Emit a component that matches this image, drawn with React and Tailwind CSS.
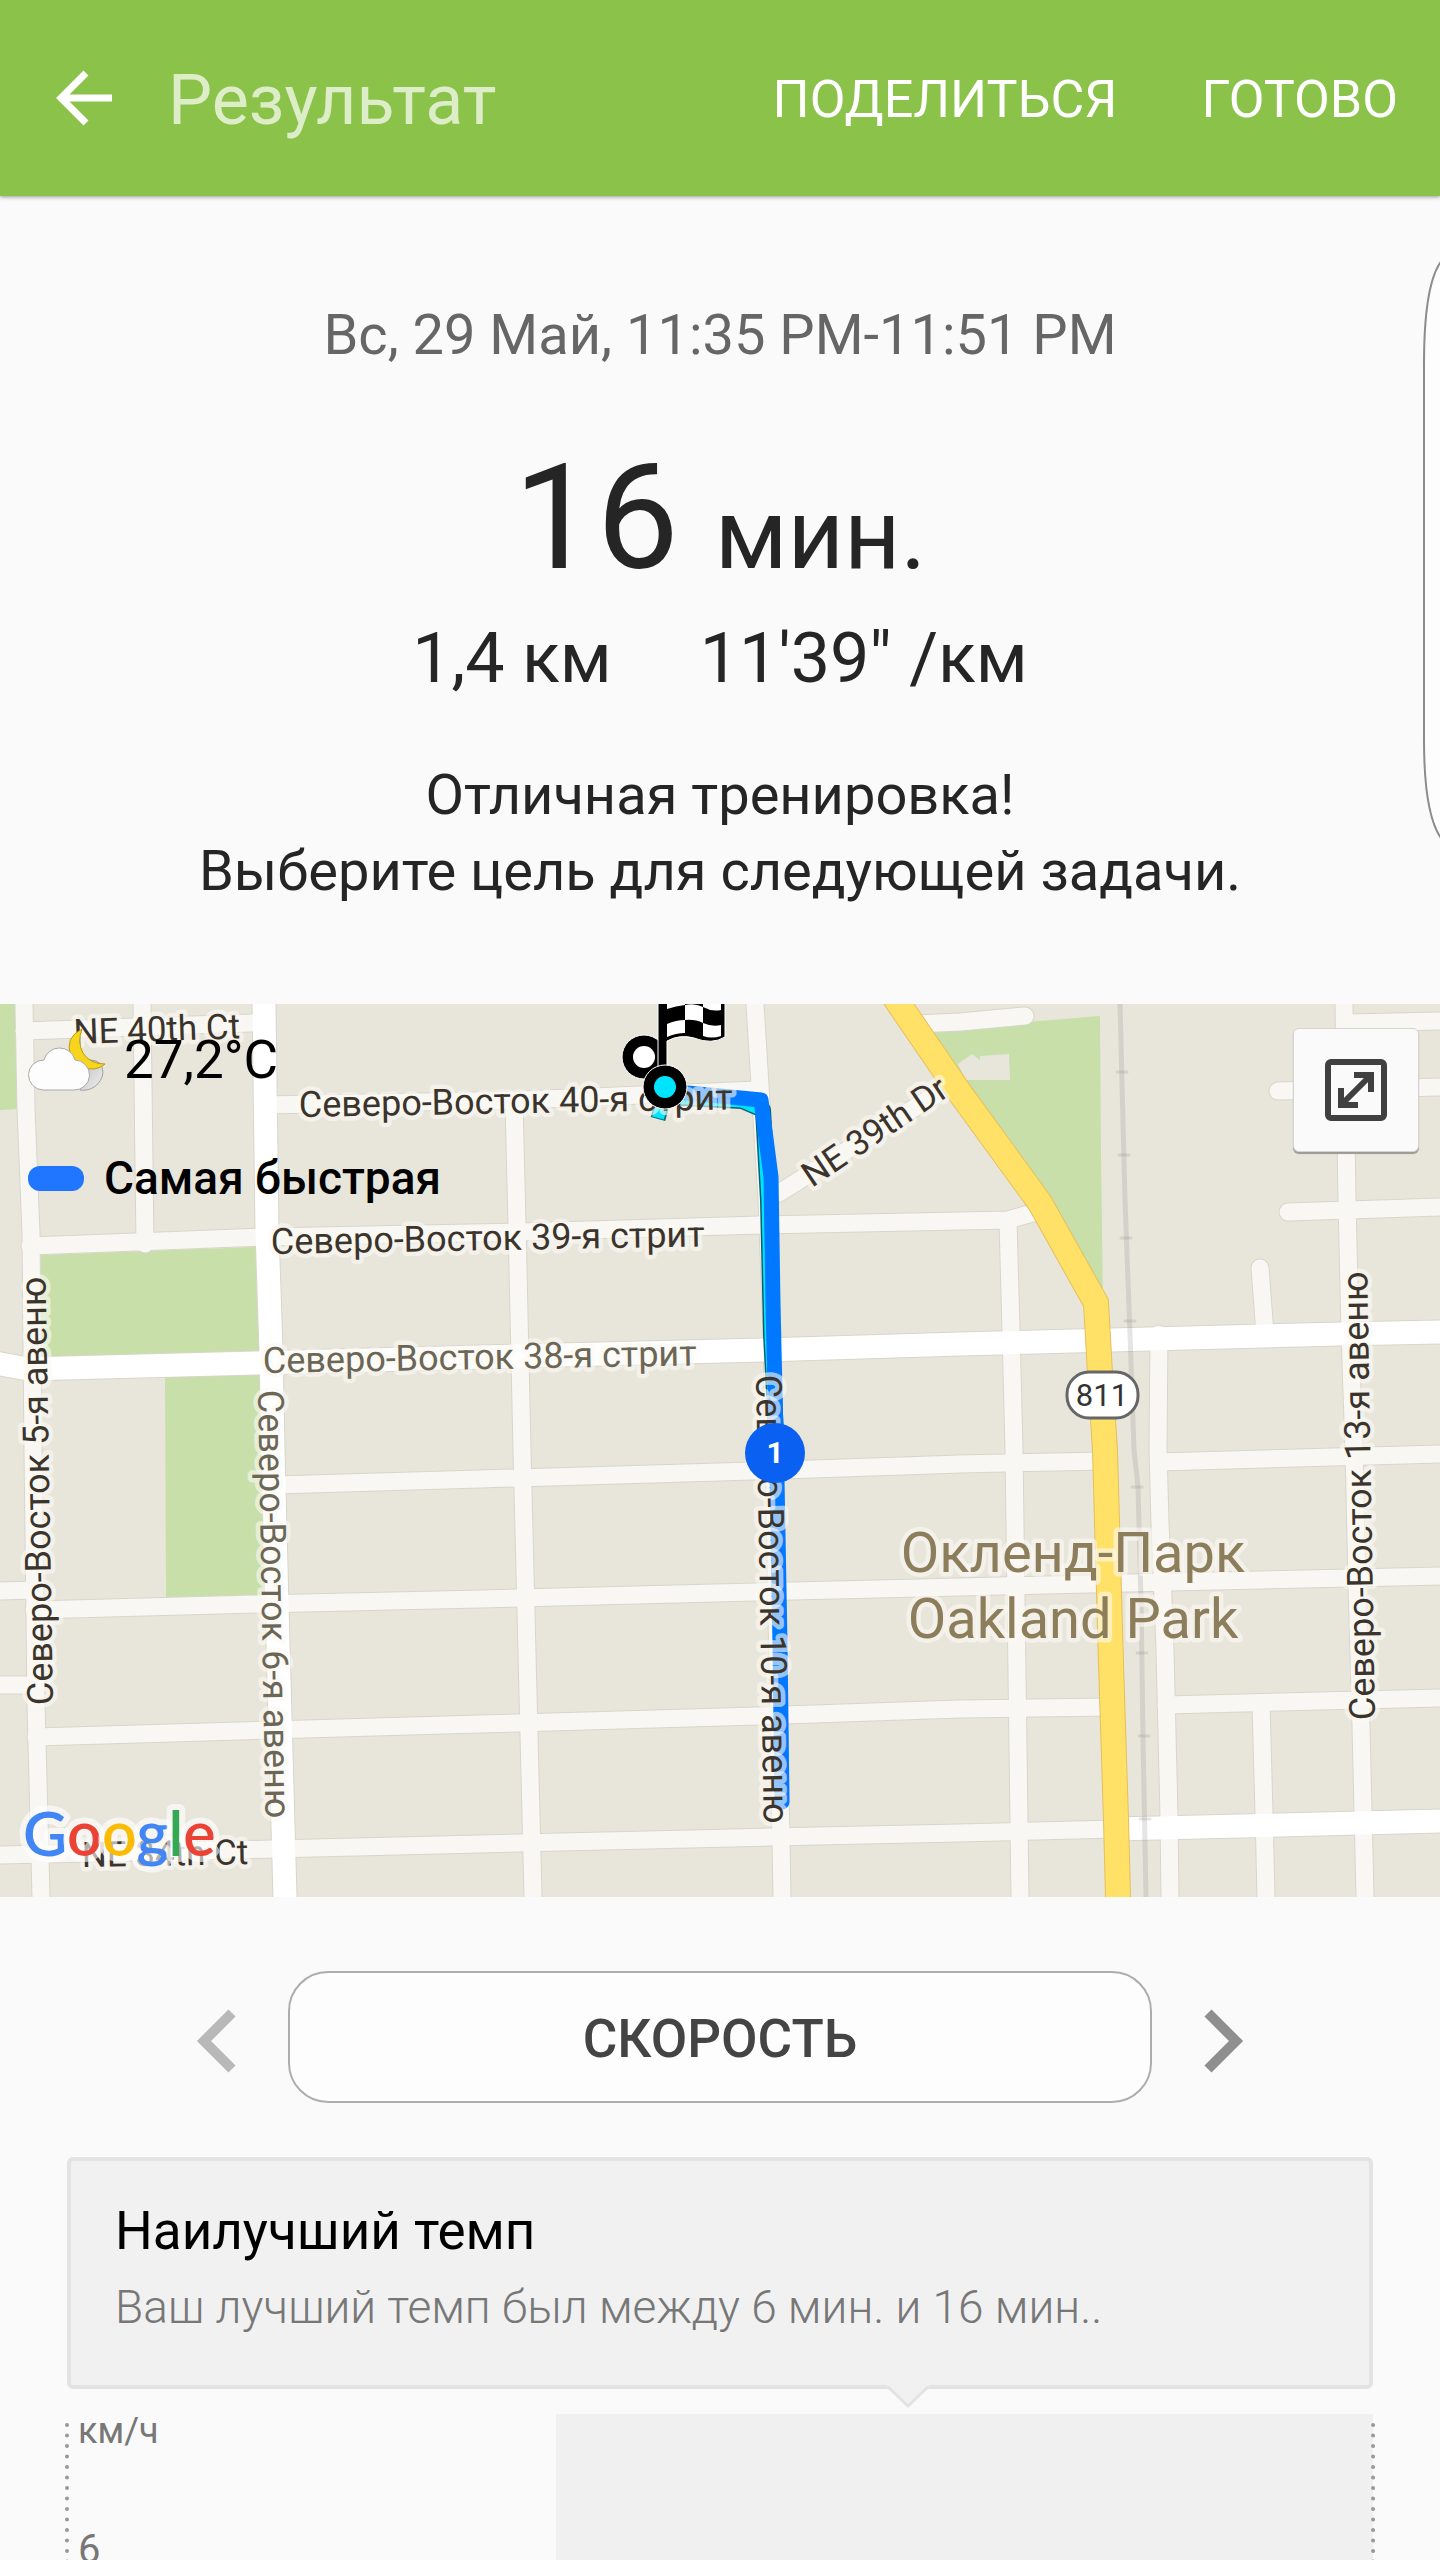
import { useState } from 'react'

const METRICS = ['СКОРОСТЬ', 'ВЫСОТА']

// Street geometry, in the map's own coordinates
const STREETS = [
  'M24 0 L26 105 L31 229 L33 446 L36 700 L41 893',
  'M142 0 L145 240',
  'M514 98 L517 220 L522 446 L533 893',
  'M755 0 L767 196 L772 330 L782 893',
  'M1008 217 L1011 326 L1014 446 L1020 893',
  'M1159 330 L1158 446 L1160 519 L1165 646 L1169 812 L1170 893',
  'M1261 700 L1264 809 L1266 893',
  'M1344 0 L1347 196 L1350 330 L1354 446 L1357 580 L1361 722 L1365 893',
  'M24 27 L250 19 L264 18',
  'M264 101 L523 96 L757 86',
  'M30 242 L136 238 L264 233 L520 228 L760 221 L960 217 L1008 216 L1036 208',
  'M276 481 L480 475 L753 467 L960 460 L1104 457',
  'M1159 458 L1440 450',
  'M0 587 L34 586',
  'M34 606 L260 600 L480 595 L755 588 L960 583 L1170 578 L1440 572',
  'M0 681 L36 681',
  'M36 733 L270 726 L480 720 L757 712 L960 705 L1108 703',
  'M1166 701 L1440 694',
  'M0 851 L273 845 L480 840 L770 833 L960 829 L1115 825',
  'M1350 19 L1440 17',
  'M779 189 L943 86',
  'M915 20 L960 18 L1025 12',
  'M1278 87 L1440 83',
  'M1288 208 L1440 203',
  'M1260 264 L1265 330',
]

const AVENUES = [
  'M264 0 L267 226 L271 346 L273 446 L278 640 L285 893',
  'M-10 358 L28 365 L257 359 L520 352 L763 346 L960 340 L1340 330 L1440 328',
  'M1116 825 L1440 817',
]

const HIGHWAY = 'M890 -14 L899 0 L960 89 L1040 199 L1096 299 L1100 369 L1105 446 L1111 660 L1116 816 L1118 893'
const RAILWAY = 'M1120 0 L1122 79 L1125 196 L1130 330 L1134 446 L1138 483 L1141 596 L1143 733 L1146 893'

const RAIL_TICKS = [
  [1122, 68],
  [1124, 151],
  [1126, 234],
  [1130, 317],
  [1137, 483],
  [1142, 649],
  [1144, 732],
  [1145, 815],
]

const LABELS = [
  { text: 'NE 40th Ct', x: 74, y: 40, angle: -2, size: 35, color: '#3b342c' },
  { text: 'Северо-Восток 40-я стрит', x: 299, y: 113, angle: -1, size: 36, color: '#3b342c' },
  { text: 'Северо-Восток 39-я стрит', x: 271, y: 250, angle: -1, size: 36, color: '#3b342c' },
  { text: 'Северо-Восток 38-я стрит', x: 263, y: 369, angle: -1, size: 36, color: '#6b6655' },
  { text: 'NE 39th Dr', x: 812, y: 184, angle: -34, size: 35, color: '#3b342c' },
  { text: 'NE 34th Ct', x: 82, y: 863, angle: -1, size: 35, color: '#3b342c' },
  { text: 'Северо-Восток 5-я авеню', x: 53, y: 701, angle: -91, size: 36, color: '#3b342c' },
  { text: 'Северо-Восток 6-я авеню', x: 258, y: 386, angle: 89, size: 36, color: '#6b6655' },
  { text: 'Северо-Восток 10-я авеню', x: 756, y: 371, angle: 89, size: 36, color: '#3b342c' },
  { text: 'Северо-Восток 13-я авеню', x: 1375, y: 716, angle: -91, size: 36, color: '#3b342c' },
]

function Roads() {
  return (
    <g fill="none" strokeLinecap="round">
      <g stroke="#d8d6cb" strokeWidth="19">
        {STREETS.map((d) => (
          <path key={d} d={d} />
        ))}
      </g>
      <g stroke="#d8d6cb" strokeWidth="25">
        {AVENUES.map((d) => (
          <path key={d} d={d} />
        ))}
      </g>
      <g stroke="#f9f7f3" strokeWidth="17">
        {STREETS.map((d) => (
          <path key={d} d={d} />
        ))}
      </g>
      <g stroke="#ffffff" strokeWidth="23">
        {AVENUES.map((d) => (
          <path key={d} d={d} />
        ))}
      </g>
      <g stroke="#8a8a8a" strokeOpacity="0.22">
        <path d={RAILWAY} strokeWidth="5" />
        {RAIL_TICKS.map(([x, y]) => (
          <path key={y} d={`M${x - 5} ${y} h10`} strokeWidth="3" />
        ))}
      </g>
      <path d={HIGHWAY} stroke="#e6bf5c" strokeWidth="26" />
      <path d={HIGHWAY} stroke="#ffe168" strokeWidth="24" />
    </g>
  )
}

function Route() {
  return (
    <g fill="none" strokeLinejoin="round">
      <path d="M663 96 L658 115" stroke="#0b6a78" strokeWidth="15" />
      <path d="M663 96 L658 114" stroke="#00e5ff" strokeWidth="12" />
      <path d="M665 93 L742 97 L763 106 L768 196 L771 330 L776 430" stroke="#0b5f6e" strokeWidth="16" />
      <path d="M665 93 L742 97 L763 106 L768 196 L771 330 L776 430" stroke="#00e5ff" strokeWidth="13" />
      <path d="M665 87 L720 92 L761 96 L771 173 L773 300 L777 476 L780 640 L782 798" stroke="#0078ff" strokeWidth="15" strokeLinecap="round" />
    </g>
  )
}

function Labels() {
  return (
    <g paintOrder="stroke" stroke="#fbf9f3" strokeOpacity="0.6" strokeWidth="9" strokeLinejoin="round">
      {LABELS.map(({ text, x, y, angle, size, color }) => (
        <text key={text} transform={`translate(${x} ${y}) rotate(${angle})`} fontSize={size} fill={color}>
          {text}
        </text>
      ))}
      <g fontSize="56" fill="#8c7d5b" textAnchor="middle">
        <text x="1073" y="568">Окленд-Парк</text>
        <text x="1073" y="634">Oakland Park</text>
      </g>
    </g>
  )
}

function Markers() {
  return (
    <g>
      <rect x="1067" y="368" width="71" height="46" rx="22" fill="#fff" stroke="#666" strokeWidth="3" />
      <text x="1102" y="402" fontSize="31" textAnchor="middle" fill="#333">811</text>

      <circle cx="775" cy="449" r="30" fill="#0a60f0" />
      <text x="775" y="459" fontSize="30" fontWeight="700" textAnchor="middle" fill="#fff">1</text>

      {/* start */}
      <circle cx="644" cy="53" r="22" fill="#000" stroke="#fff" strokeWidth="1" />
      <circle cx="644" cy="53" r="11" fill="#fff" />

      {/* finish flag */}
      <path d="M658 -4 H725 V33 Q712 41 694 34 Q680 30 667 37 V70 H658 Z" fill="#000" stroke="#fff" strokeWidth="1" />
      <path d="M667 -4 H685 V1 Q676 2 667 5 Z" fill="#fff" />
      <path d="M703 -4 H721 V6 Q712 8 703 3 Z" fill="#fff" />
      <path d="M685 1 Q695 -1 703 3 V19 Q695 15 685 16 Z" fill="#fff" />
      <path d="M667 20 Q676 16 685 16 V29 Q676 29 667 33 Z" fill="#fff" />
      <path d="M703 19 Q712 23 721 21 V32 Q712 35 703 32 Z" fill="#fff" />
      <circle cx="665" cy="83" r="22" fill="#000" stroke="#fff" strokeWidth="1" />
      <circle cx="665" cy="83" r="11" fill="#00e5ff" />
    </g>
  )
}

function GoogleLogo() {
  return (
    <text
      x="23"
      y="852"
      fontSize="61"
      fontWeight="600"
      className="font-[Lato,sans-serif]"
      paintOrder="stroke"
      stroke="#ffffff"
      strokeOpacity="0.6"
      strokeWidth="12"
      strokeLinejoin="round"
    >
      <tspan fill="#4285f4">G</tspan>
      <tspan fill="#ea4335">o</tspan>
      <tspan fill="#fbbc05">o</tspan>
      <tspan fill="#4285f4">g</tspan>
      <tspan fill="#34a853">l</tspan>
      <tspan fill="#ea4335">e</tspan>
    </text>
  )
}

function WeatherIcon() {
  return (
    <svg viewBox="0 0 78 64" className="h-16 w-[78px]" aria-hidden="true">
      <defs>
        <linearGradient id="cloud-back" x1="0" y1="0" x2="1" y2="1">
          <stop offset="0" stopColor="#bdbdbd" />
          <stop offset="1" stopColor="#f0f0f0" />
        </linearGradient>
      </defs>
      <path d="M52 62 A20 20 0 0 0 75 45 Q75 32 62 32 Z" fill="url(#cloud-back)" stroke="#a0a0a0" strokeWidth="1" />
      <path d="M54 1 Q36 10 43 28 Q52 42 66 41 Q73 40 77 36 Q62 36 55 25 Q49 14 54 1 Z" fill="#f7d51d" stroke="#b99b1d" strokeWidth="1" />
      <path
        d="M15 62 A15 15 0 0 1 16 32 A16 16 0 0 1 47 32 A15 15 0 0 1 46 62 Z"
        fill="#fdfdfd"
        stroke="#a8a8a8"
        strokeWidth="1"
      />
    </svg>
  )
}

function RouteMap() {
  return (
    <section className="relative h-[893px] overflow-hidden bg-[#e8e6db]">
      <svg viewBox="0 0 1440 893" preserveAspectRatio="xMidYMid slice" className="h-full w-full">
        <g fill="#c8dfaa">
          <path d="M0 0 H15 L17 105 L0 106 Z" />
          <path d="M41 251 L256 243 L259 352 L41 352 Z" />
          <path d="M165 370 L262 366 L264 592 L166 593 Z" />
          <path d="M910 27 L1100 12 L1101 150 L1103 298 L1040 210 Z" />
        </g>
        <path d="M958 60 L972 50 L980 56 V52 L1009 50 L1010 76 H966 Z" fill="#e8e6db" />
        <Roads />
        <Route />
        <Labels />
        <Markers />
        <GoogleLogo />
      </svg>

      <div className="absolute left-7 top-5 flex flex-col text-black">
        <div className="flex items-center gap-[18px]">
          <WeatherIcon />
          <span className="text-[53px] leading-[72px]">27,2°C</span>
        </div>
        <div className="mt-[54px] flex items-center gap-5">
          <span className="h-[25px] w-14 rounded-xl bg-[#2176ff]" />
          <span className="text-[46px] font-medium leading-[56px]">Самая быстрая</span>
        </div>
      </div>

      <button
        type="button"
        aria-label="Развернуть карту"
        className="absolute right-[21px] top-6 flex h-[124px] w-[126px] items-center justify-center rounded-md border border-[#d5d5d0] bg-[#fafafa] shadow-[0_2px_1px_#9a9a94]"
      >
        <svg viewBox="0 0 62 62" className="size-[62px]" fill="none" stroke="#404040" strokeWidth="6">
          <rect x="3" y="3" width="56" height="56" rx="3" />
          <path d="M16 46 L46 16 M29 16 H46 V33 M16 29 V46 H33" />
        </svg>
      </button>
    </section>
  )
}

function Chevron({ label, disabled, onClick, flip }) {
  return (
    <button
      type="button"
      aria-label={label}
      disabled={disabled}
      onClick={onClick}
      className="mt-2 shrink-0 text-[#8f8f8f] disabled:text-[#b8b8b8]"
    >
      <svg viewBox="0 0 40 64" className={flip ? 'h-16 w-10 -scale-x-100' : 'h-16 w-10'} fill="none" stroke="currentColor" strokeWidth="10">
        <path d="M36 4 L8 32 L36 60" />
      </svg>
    </button>
  )
}

function App() {
  const [metric, setMetric] = useState(0)

  return (
    <div className="relative flex h-screen flex-col overflow-hidden bg-[#fafafa] font-[Roboto,sans-serif] text-[#252525]">
      <header className="z-10 flex h-[196px] shrink-0 items-center bg-[#8bc34a] pl-14 pr-[42px] text-white shadow-[0_1px_4px_rgba(0,0,0,0.4)]">
        <button type="button" aria-label="Назад">
          <svg viewBox="0 0 56 56" className="size-14" fill="none" stroke="currentColor" strokeWidth="7">
            <path d="M56 28 H5 M30 3 L5 28 L30 53" />
          </svg>
        </button>
        <h1 className="ml-14 mt-1 text-[70px] leading-[84px] text-[#dcedc8]">Результат</h1>
        <div className="ml-auto mt-1 flex gap-[84px] text-[52px] leading-[72px]">
          <button type="button">ПОДЕЛИТЬСЯ</button>
          <button type="button">ГОТОВО</button>
        </div>
      </header>

      <section className="shrink-0 pb-[95px] pt-[101px] text-center">
        <p className="text-[56px] leading-[76px] text-[#666]">Вс, 29 Май, 11:35 PM-11:51 PM</p>
        <p className="mt-[65px] flex items-baseline justify-center gap-9 text-[147px] leading-[160px]">
          16 <span className="text-[98px] leading-none">мин.</span>
        </p>
        <p className="mt-[18px] flex justify-center gap-[88px] text-[70px] leading-[84px]">
          <span>1,4 км</span>
          <span>11'39" /км</span>
        </p>
        <p className="mt-[57px] text-[56px] leading-[76px]">
          Отличная тренировка!
          <br />
          Выберите цель для следующей задачи.
        </p>
      </section>

      {/* edge panel handle */}
      <svg viewBox="0 0 20 584" className="absolute right-0 top-[258px] h-[584px] w-5" fill="#fdfdfd" stroke="#8c8c8c" strokeWidth="2">
        <path d="M24 0 Q4 20 4 106 V482 Q4 562 24 584" />
      </svg>

      <div className="shrink-0">
        <RouteMap />
      </div>

      <div className="flex shrink-0 items-center justify-center gap-[52px] pt-[74px]">
        <Chevron label="Предыдущий" disabled={metric === 0} onClick={() => setMetric(metric - 1)} />
        <button
          type="button"
          className="h-[132px] w-3/5 rounded-[40px] border-2 border-[#adadad] bg-[#fdfdfd] pt-1.5 text-[53px] font-medium text-[#444]"
        >
          {METRICS[metric]}
        </button>
        <Chevron label="Следующий" flip disabled={metric === METRICS.length - 1} onClick={() => setMetric(metric + 1)} />
      </div>

      <section className="relative mx-[67px] mt-[54px] shrink-0 rounded-md border-4 border-[#e3e3e3] bg-[#f1f1f1] px-11 pb-10 pt-8">
        <h2 className="text-[53px] leading-[76px] text-black">Наилучший темп</h2>
        <p className="text-[46px] font-light leading-[76px] text-[#777]">Ваш лучший темп был между 6 мин. и 16 мин..</p>
        <svg viewBox="0 0 48 24" className="absolute left-[813px] top-full h-6 w-12">
          <path d="M2 0 L24 21 L46 0" fill="#f1f1f1" stroke="#e3e3e3" strokeWidth="3" />
          <path d="M3 0 H45" stroke="#f1f1f1" strokeWidth="2" />
        </svg>
      </section>

      <section className="relative mx-[65px] mt-[25px] flex min-h-0 flex-1 pr-0.5 text-[#777]">
        <div className="-mt-1 flex w-[491px] shrink-0 flex-col gap-[74px] pl-[13px]">
          <span className="text-[36px] leading-[42px]">км/ч</span>
          <span className="text-[40px] leading-[48px]">6</span>
        </div>
        <div className="grow bg-[#f0f0f0]" />
        <svg className="absolute inset-0 h-full w-full" stroke="#999" strokeWidth="4" strokeLinecap="round" strokeDasharray="0 10.500">
          <line x1="2" y1="11" x2="2" y2="400" />
          <line x1="99.850%" y1="11" x2="99.850%" y2="400" />
        </svg>
      </section>
    </div>
  )
}

export default App
